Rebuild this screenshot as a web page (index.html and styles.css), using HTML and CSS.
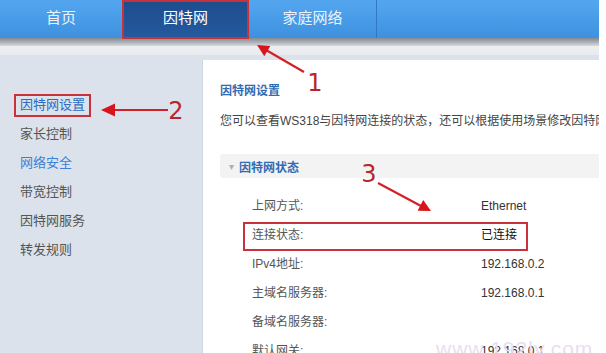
FILE: index.html
```html
<!DOCTYPE html>
<html>
<head>
  <meta charset="utf-8">
  <title>因特网设置</title>
  <link rel="stylesheet" href="styles.css">
</head>
<body>
  <div class="page">
    <header class="topbar">
      <nav class="tabs">
        <a class="tab tab-first">首页</a>
        <a class="tab tab-active">因特网</a>
        <a class="tab tab-last">家庭网络</a>
      </nav>
    </header>
    <div class="topbar-shade"></div>
    <div class="topbar-strip"></div>

    <div class="main">
      <aside class="sidebar">
        <ul class="menu">
          <li class="menu-item is-current">因特网设置</li>
          <li class="menu-item">家长控制</li>
          <li class="menu-item is-link">网络安全</li>
          <li class="menu-item">带宽控制</li>
          <li class="menu-item">因特网服务</li>
          <li class="menu-item">转发规则</li>
        </ul>
      </aside>

      <section class="panel">
        <h2 class="panel-title">因特网设置</h2>
        <p class="panel-desc">您可以查看WS318与因特网连接的状态，还可以根据使用场景修改因特网的</p>

        <div class="group-head">
          <span class="caret">▾</span>
          <span class="group-title">因特网状态</span>
        </div>

        <dl class="info-list">
          <div class="info-row"><dt>上网方式:</dt><dd>Ethernet</dd></div>
          <div class="info-row"><dt>连接状态:</dt><dd class="strong">已连接</dd></div>
          <div class="info-row"><dt>IPv4地址:</dt><dd>192.168.0.2</dd></div>
          <div class="info-row"><dt>主域名服务器:</dt><dd>192.168.0.1</dd></div>
          <div class="info-row"><dt>备域名服务器:</dt><dd></dd></div>
          <div class="info-row"><dt>默认网关:</dt><dd>192.168.0.1</dd></div>
        </dl>
      </section>
    </div>

    <div class="watermark">www.192ly.com</div>

    <!-- annotation layer -->
    <svg class="marks" width="606" height="353" viewBox="0 0 606 353">
      <g fill="none" stroke="#c9323b" stroke-width="2">
        <rect x="123" y="1" width="125" height="37"/>
        <rect x="15" y="95" width="75" height="21"/>
        <rect x="244" y="223" width="283" height="27"/>
      </g>
      <g stroke="#d42027" stroke-width="2.2">
        <line x1="304" y1="72" x2="266" y2="50"/>
        <line x1="168" y1="110" x2="112" y2="110"/>
        <line x1="378" y1="183" x2="421" y2="206"/>
      </g>
      <g fill="#d8141c">
        <polygon points="257,45 270.3,45.9 264.3,56.3"/>
        <polygon points="101,110 115,103.5 115,116.5"/>
        <polygon points="431,211 417.6,210.7 423.2,200.1"/>
      </g>
      <g class="mark-num" fill="#b8252c">
        <text x="315" y="91">1</text>
        <text x="176" y="119">2</text>
        <text x="369" y="182">3</text>
      </g>
    </svg>
  </div>
</body>
</html>
```

FILE: styles.css
```css
html,
body,
div,
h2,
p,
ul,
li,
dl,
dt,
dd {
  margin: 0;
  padding: 0;
  list-style: none;
}

body {
  width: 606px;
  height: 353px;
  overflow: hidden;
  background: #fff;
  font-family: "Liberation Sans", "Noto Sans CJK SC", sans-serif;
  font-size: 12px;
  color: #444;
}

.page {
  position: relative;
  width: 599px;
  height: 353px;
  overflow: hidden;
}

/* top bar */
.topbar {
  height: 38px;
  background: linear-gradient(#53a6ee, #3e91df);
}
.tabs {
  display: flex;
  height: 38px;
}
.tab {
  display: block;
  width: 127px;
  line-height: 36px;
  text-align: center;
  font-size: 15px;
  color: #eaf3fc;
}
.tab-first {
  width: 122px;
}
.tab-active {
  background: linear-gradient(#1d4c8c, #245a9f);
  color: #fff;
}
.tab-last {
  border-right: 1px solid #3478c2;
}
.topbar-shade {
  height: 8px;
  background: linear-gradient(#848a90, #aab0b5 50%, #d8dbde);
}
.topbar-strip {
  height: 9px;
  background: linear-gradient(#eeeff1, #e7eaee);
}

/* body */
.main {
  display: flex;
  height: 298px;
  background: #dbe2eb;
}
.sidebar {
  flex-shrink: 0;
  width: 202px;
  padding-top: 35px;
}
.menu-item {
  padding-left: 20px;
  line-height: 29px;
  font-size: 13px;
  color: #555;
}
.menu-item.is-current {
  color: #2a6cc4;
}
.menu-item.is-link {
  color: #3d80d6;
}

.panel {
  flex: 1;
  min-width: 0;
  overflow: hidden;
  margin-top: 5px;
  padding: 21px 0 0 17px;
  background: #fff;
  border-left: 1px solid #cfd8e3;
}
.panel-title {
  font-size: 12px;
  line-height: 20px;
  font-weight: bold;
  color: #2f6cb4;
}
.panel-desc {
  margin-top: 10px;
  line-height: 20px;
  white-space: nowrap;
  color: #444;
}
.group-head {
  display: flex;
  align-items: center;
  height: 24px;
  margin-top: 23px;
  padding-left: 9px;
  background: #f3f3f3;
  border-radius: 3px 0 0 3px;
}
.caret {
  width: 10px;
  font-size: 10px;
  color: #a9b0b8;
}
.group-title {
  font-weight: bold;
  color: #2f6cb4;
}

.info-list {
  margin-top: 14px;
  padding-left: 32px;
}
.info-row {
  display: flex;
  line-height: 29px;
}
.info-row dt {
  width: 229px;
  color: #555;
}
.info-row dd {
  color: #333;
}
.info-row dd.strong {
  color: #111;
}

.watermark {
  position: absolute;
  left: 436px;
  top: 337px;
  font-size: 21px;
  letter-spacing: 1px;
  color: #ecdcf2;
}

.marks {
  position: absolute;
  left: 0;
  top: 0;
  pointer-events: none;
}
.mark-num {
  font-family: "DejaVu Sans", sans-serif;
  font-size: 24px;
  text-anchor: middle;
}
```
